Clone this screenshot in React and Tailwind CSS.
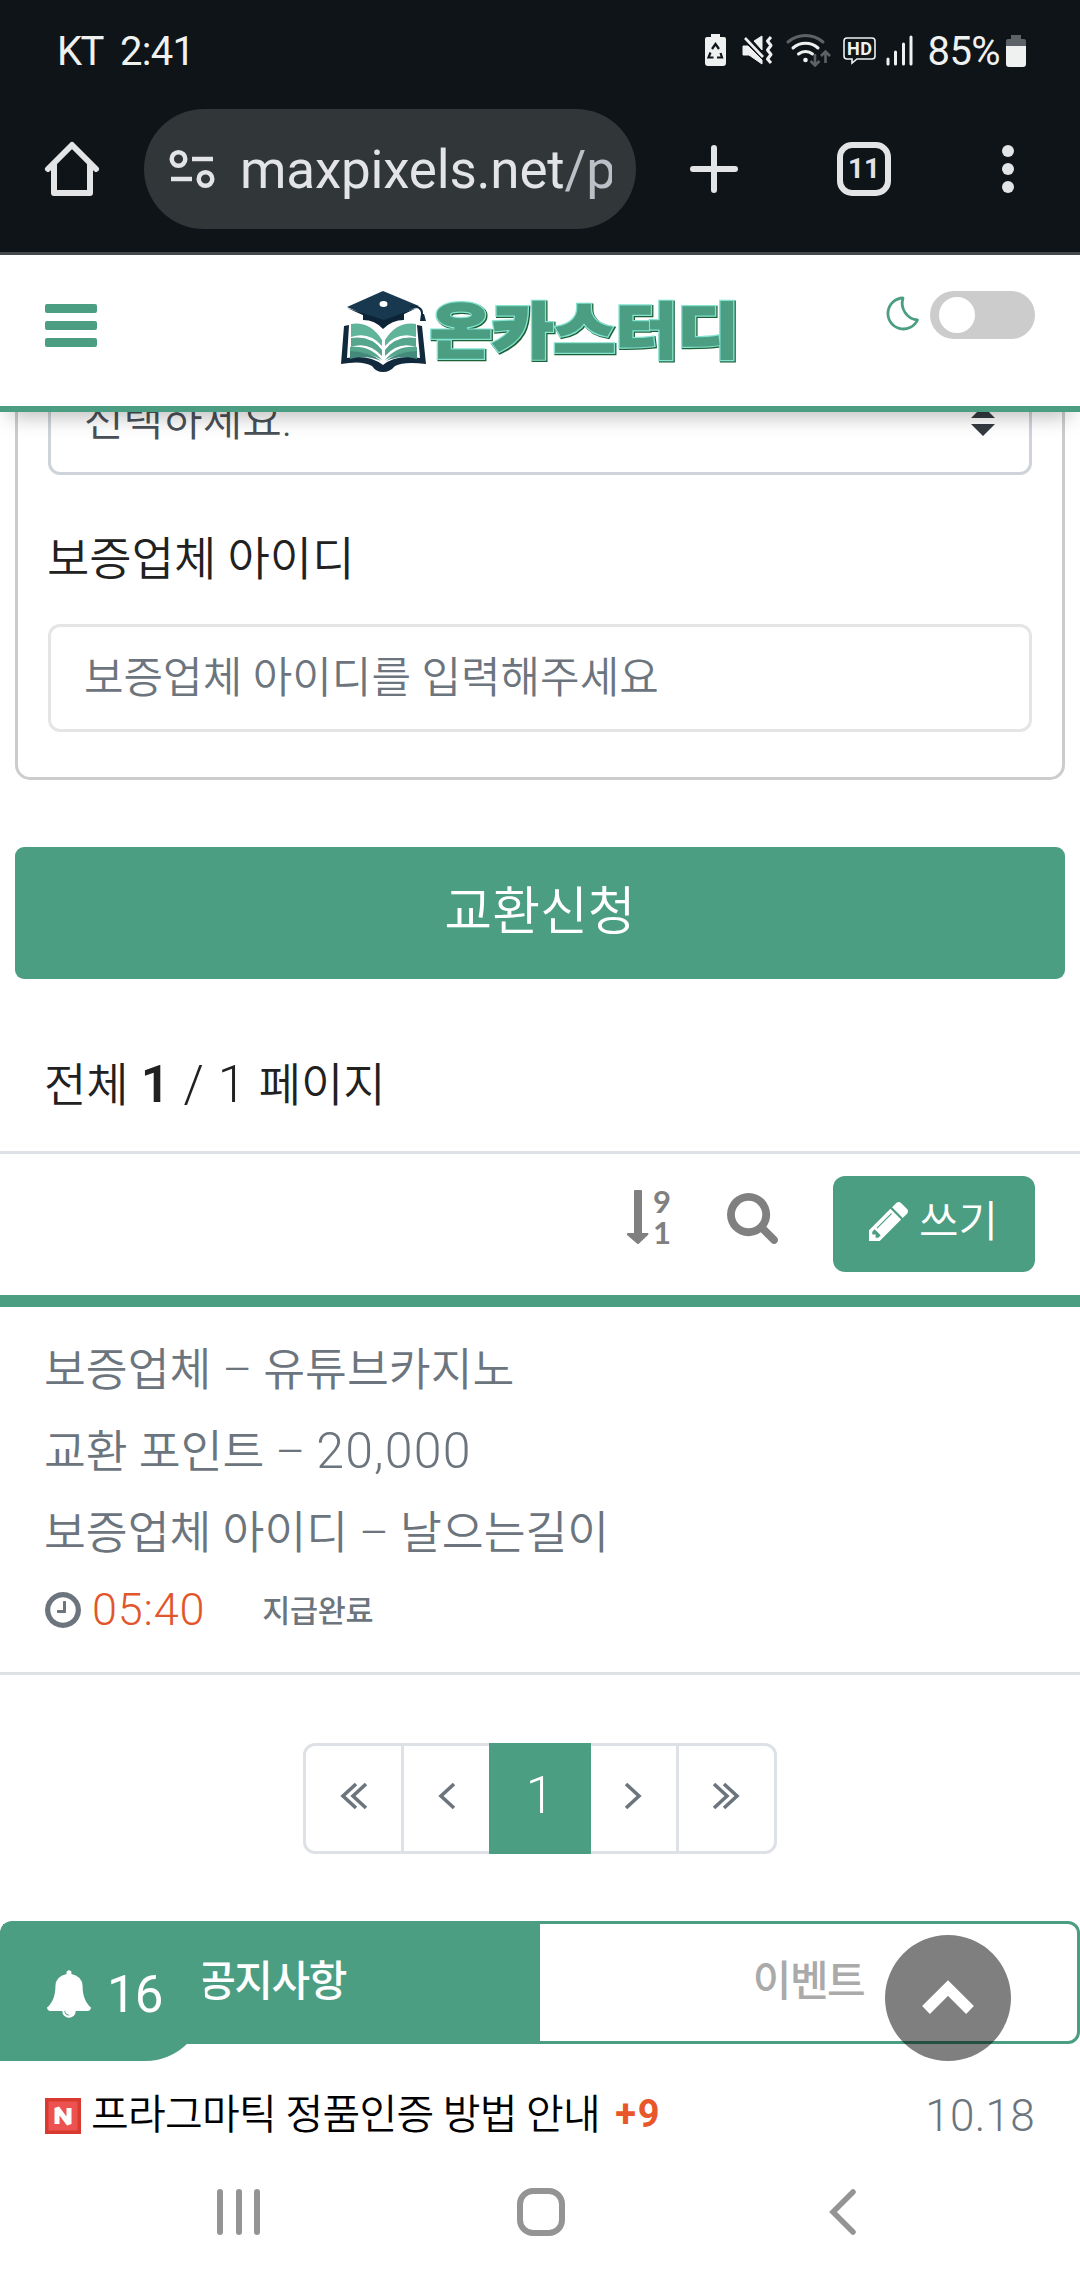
const faSearch = 'M1216 832q0-185-131.5-316.5t-316.5-131.5-316.5 131.5-131.5 316.5 131.5 316.5 316.5 131.5 316.5-131.5 131.5-316.5zm512 832q0 52-38 90t-90 38q-54 0-90-38l-343-342q-179 124-399 124-143 0-273.5-55.5t-225-150-150-225-55.5-273.5 55.5-273.5 150-225 225-150 273.5-55.5 273.5 55.5 225 150 150 225 55.5 273.5q0 220-124 399l343 343q37 37 37 90z';
const faPencil = 'M491 1536l91-91-235-235-91 91v107h128v128h107zm523-928q0-22-22-22-10 0-17 7l-542 542q-7 7-7 17 0 22 22 22 10 0 17-7l542-542q7-7 7-17zm-54-192l416 416-832 832h-416v-416zm683 96q0 53-37 90l-166 166-416-416 166-165q36-38 90-38 53 0 91 38l235 234q37 39 37 91z';
const faClock = 'M1024 544v448q0 14-9 23t-23 9h-320q-14 0-23-9t-9-23v-64q0-14 9-23t23-9h224v-352q0-14 9-23t23-9h64q14 0 23 9t9 23zm416 352q0-148-73-273t-198-198-273-73-273 73-198 198-73 273 73 273 198 198 273 73 273-73 198-198 73-273zm224 0q0 209-103 385.5t-279.5 279.5-385.5 103-385.5-103-279.5-279.5-103-385.5 103-385.5 279.5-279.5 385.5-103 385.5 103 279.5 279.5 103 385.5z';
const faBell = 'M912 1696q0-16-16-16-59 0-101.5-42.5t-42.5-101.5q0-16-16-16t-16 16q0 73 51.5 124.5t124.5 51.5q16 0 16-16zm816-288q0 52-38 90t-90 38h-448q0 106-75 181t-181 75-181-75-75-181h-448q-52 0-90-38t-38-90q50-42 91-88t85-119.5 74.5-158.5 50-206 19.5-260q0-152 117-282.5t307-158.5q-8-19-8-39 0-40 28-68t68-28 68 28 28 68q0 20-8 39 190 28 307 158.5t117 282.5q0 139 19.5 260t50 206 74.5 158.5 85 119.5 91 88z';

function Glyph({ d, viewBox, className }) {
    return (
        <svg viewBox={viewBox} className={className} fill="currentColor">
            <path d={d} />
        </svg>
    );
}

function StatusIcons() {
    return (
        <svg width="220" height="40" viewBox="700 32 220 40" fill="none">
            {/* Battery saver */}
            <path d="M710 35h9v3h4a2 2 0 0 1 2 2v24a3 3 0 0 1-3 3h-15a3 3 0 0 1-3-3v-24a2 2 0 0 1 2-2h4z" fill="#eff1f1" />
            <path d="M711 50l3.500-5 3.500 5M719.500 54l1.500 4.500h-5M712.500 58.500h-5l2-5" stroke="#0f1418" strokeWidth="2.200" />
            {/* Muted, vibrating */}
            <path d="M742 47h5l14 14v4l-13-9h-6zM753 42l8-5v14z" fill="#eff1f1" stroke="#eff1f1" strokeWidth="1" strokeLinejoin="round" />
            <path d="M744 39l18 19" stroke="#eff1f1" strokeWidth="2.600" />
            <path d="M770 38l-3.500 4 3.500 4.500-3.500 4.500 3.500 4.500-3.500 4.500 3.500 4" stroke="#eff1f1" strokeWidth="3" strokeLinejoin="round" />
            {/* Wifi */}
            <path d="M787 43a27 27 0 0 1 35 0" stroke="#5d6266" strokeWidth="3" strokeLinecap="round" />
            <path d="M792 49a19 19 0 0 1 25 0M797.500 55a11 11 0 0 1 14 0" stroke="#eff1f1" strokeWidth="3" strokeLinecap="round" />
            <circle cx="804.500" cy="61" r="2.300" fill="#eff1f1" />
            <path d="M814 55v11m-4.500-4 4.500 4.500 4.500-4.500M824.500 64v-11m-4.500 4 4.500-4.500 4.500 4.500" stroke="#5d6266" strokeWidth="2.600" />
            {/* HD voice */}
            <path d="M846 39h25a3 3 0 0 1 3 3v15a3 3 0 0 1-3 3h-15l-5 4v-4h-5a3 3 0 0 1-3-3v-15a3 3 0 0 1 3-3z" stroke="#eff1f1" strokeWidth="1.600" />
            <text x="846" y="56" fill="#eff1f1" fontFamily="Roboto" fontWeight="700" fontSize="18" textLength="25">HD</text>
            {/* Signal */}
            <path d="M887 60v5M894.500 53v12M902.500 45v20M910 38v27" stroke="#eff1f1" strokeWidth="3" strokeLinecap="round" />
        </svg>
    );
}

function StatusBar() {
    return (
        <div className="flex h-[102px] items-center justify-between pl-[57px] pr-[53px] text-[#eff1f1]">
            <div className="flex gap-[17px] pt-[1px] text-[40px] leading-none">
                <span className="tracking-[-1.500px]">KT</span>
                <span className="tracking-[-0.700px]">2:41</span>
            </div>
            <div className="flex items-center">
                <StatusIcons />
                <span className="ml-[7px] pt-[1px] text-[40px] leading-none tracking-[-0.600px]">85%</span>
                <svg className="ml-[5px]" width="22" height="34" viewBox="0 0 22 34">
                    <path d="M6 1h10v4h3a2 2 0 0 1 2 2v5H1V7a2 2 0 0 1 2-2h3z" fill="#5d6266" />
                    <path d="M1 12h20v18a3 3 0 0 1-3 3H4a3 3 0 0 1-3-3z" fill="#eff1f1" />
                </svg>
            </div>
        </div>
    );
}

function BrowserBar() {
    return (
        <div className="flex h-[150px] items-center pb-[16px] pl-[42px] text-[#e3e4e6]">
            <svg width="60" height="60" viewBox="42 139 60 60" fill="none" stroke="currentColor" strokeWidth="6" strokeLinecap="round" strokeLinejoin="round">
                <path d="M48 169l24-24 24 24M54 164v29h36v-29" />
            </svg>
            <div className="ml-[42px] flex h-[120px] w-[492px] items-center rounded-full bg-[#313639] pl-[24px]">
                <svg width="48" height="42" viewBox="168 148 48 42" fill="none" stroke="currentColor" strokeWidth="4.500">
                    <circle cx="178.500" cy="159" r="6.800" />
                    <circle cx="205.500" cy="179" r="6.800" />
                    <path d="M192 159h21M171 179h21" />
                </svg>
                <div className="ml-[24px] w-[372px] overflow-hidden whitespace-nowrap pt-[2px] text-[53px] leading-[70px] tracking-[-0.200px]">
                    maxpixels.net<span className="text-[#b9c0c6]">/p</span>
                </div>
            </div>
            <svg className="ml-[48px]" width="60" height="60" viewBox="0 0 60 60" stroke="currentColor" strokeWidth="6" strokeLinecap="round">
                <path d="M30 9v42M9 30h42" />
            </svg>
            <div className="ml-[93px] flex size-[54px] items-center justify-center rounded-[15px] border-[6px] border-[#e3e4e6] text-[28px] font-bold">11</div>
            <div className="ml-[111px] flex flex-col gap-[6px]">
                <i className="size-[12px] rounded-full bg-[#e3e4e6]" />
                <i className="size-[12px] rounded-full bg-[#e3e4e6]" />
                <i className="size-[12px] rounded-full bg-[#e3e4e6]" />
            </div>
        </div>
    );
}

function Logo() {
    return (
        <svg width="404" height="90" viewBox="338 288 404 90" className="ml-[241px]">
            <path d="M344 326l5-1-2 33q22-4 36 7 13-11 37-7l-3-33 5 1 4 38q-22-3-31 2-5 6-12 6t-11-6q-10-6-31-2z" fill="#10293d" />
            <path d="M351 324q19-3 31 16v6q-13-15-31-9z" fill="#5fb49a" />
            <path d="M416 324q-19-3-31 16v6q13-15 31-9z" fill="#5fb49a" />
            <path d="M351 338q20-3 31 12v6q-14-15-31-9zM416 338q-20-3-31 12v6q14-15 31-9z" fill="#55a68d" />
            <path d="M350 347q20-2 32 13-14-8-32-8zM417 347q-20-2-32 13 14-8 32-8z" fill="#55a68d" />
            <path d="M350 351q21 1 31 10-16-7-31-2zM417 351q-21 1-31 10 16-7 31-2z" fill="#438a7c" />
            <path d="M363 311l20-5 21 5v9q-12 0-21 9-8-9-20-9z" fill="#0d2336" />
            <path d="M347 307l36-16 36 15-35 17z" fill="#17384f" />
            <path d="M347 308l37 12 35-13-36 17z" fill="#0d2336" />
            <path d="M410 306q12 0 12 7v7" fill="none" stroke="#10293d" strokeWidth="2" />
            <path d="M421 314h3l2 7h-6z" fill="#10293d" />
            <ellipse cx="383.500" cy="304" rx="4" ry="3" fill="#fff" />
            <g fontFamily="'Noto Sans CJK KR', sans-serif" fontWeight="900" fontSize="60" strokeLinejoin="miter">
                <text x="431" y="354" textLength="309" lengthAdjust="spacingAndGlyphs" fill="#1f6038" stroke="#1f6038" strokeWidth="4.500">온카스터디</text>
                <text x="430" y="353" textLength="309" lengthAdjust="spacingAndGlyphs" fill="#85e3d2" stroke="#85e3d2" strokeWidth="4">온카스터디</text>
                <text x="430" y="353" textLength="309" lengthAdjust="spacingAndGlyphs" fill="#4b9e81" stroke="#4b9e81" strokeWidth="1.600">온카스터디</text>
            </g>
        </svg>
    );
}

function Header() {
    return (
        <header className="relative z-10 flex h-[157px] items-start border-b-[6px] border-[#4b9e81] bg-white pl-[45px] shadow-[0_14px_20px_-10px_rgba(0,0,0,0.28)]">
            <div className="mt-[49px] flex w-[52px] flex-col gap-[8px]">
                <i className="h-[9px] rounded-[2px] bg-[#4b9e81]" />
                <i className="h-[9px] rounded-[2px] bg-[#4b9e81]" />
                <i className="h-[9px] rounded-[2px] bg-[#4b9e81]" />
            </div>
            <div className="mt-[33px]">
                <Logo />
            </div>
            <svg className="ml-[143px] mt-[39px]" width="38" height="38" viewBox="885 294 38 38" fill="none" stroke="#4b9e81" strokeWidth="2.800" strokeLinejoin="round">
                <path d="M903 298a15.500 15.500 0 1 0 14.500 22a17 17 0 0 1-14.500-22z" />
            </svg>
            <div className="ml-[7px] mt-[36px] h-[48px] w-[105px] rounded-full bg-[#ccc] pl-[9px] pt-[6px]">
                <div className="size-[36px] rounded-full bg-white" />
            </div>
        </header>
    );
}

function ExchangeForm() {
    return (
        <>
            <div className="mx-[15px] flex h-[368px] flex-col rounded-b-[15px] border-x-[3px] border-b-[3px] border-[#ccc] px-[30px]">
                <div className="-mt-[45px] flex h-[108px] shrink-0 items-center justify-between rounded-[12px] border-[3px] border-[#ced4da] pl-[33px] pr-[34px]">
                    <span className="text-[43px] font-[350] text-[#495057]">선택하세요.</span>
                    <svg width="24" height="30" viewBox="0 0 24 30" fill="#343a40">
                        <path d="M0 12L12 0l12 12zM0 18l12 12 12-12z" />
                    </svg>
                </div>
                <div className="-ml-px flex h-[149px] shrink-0 items-center pt-[20px] text-[46px] font-[350] text-[#212121]">보증업체 아이디</div>
                <div className="flex h-[108px] shrink-0 items-center rounded-[12px] border-[3px] border-[#e5e5e5] pl-[33px] text-[43px] font-[350] text-[#6c757d]">
                    보증업체 아이디를 입력해주세요
                </div>
            </div>
            <button className="mx-[15px] mt-[67px] flex h-[132px] w-[1050px] items-center justify-center rounded-[9px] bg-[#4b9e81] text-[52px] font-[350] text-white">
                교환신청
            </button>
        </>
    );
}

function Toolbar() {
    return (
        <>
            <div className="mt-[60px] flex h-[115px] items-center border-b-[3px] border-[#dee2e6] pb-[24px] pl-[44px] pt-[4px] text-[46px] font-[350] text-[#212121]">
                <span className="flex items-center gap-[12px]">
                    전체
                    <span className="whitespace-pre text-[51px] font-[350] tracking-[0.700px]"><b className="font-semibold">1</b> / 1</span>
                    페이지
                </span>
            </div>
            <div className="flex h-[153px] items-start justify-end border-b-[12px] border-[#4b9e81] pr-[45px] pt-[22px]">
                <div className="mt-[14px] flex text-[#808080]">
                    <svg width="22" height="54" viewBox="0 0 22 54" fill="currentColor">
                        <path d="M7 1q0-1 1-1h6q1 0 1 1v42h6q1 0 0 2L11.500 54q-.500.500-1 0L0 45q-.500-2 1-2h6z" />
                    </svg>
                    <div className="-mt-[4px] ml-[4px] flex flex-col font-[Lato] text-[31px] font-bold leading-[31px]">
                        <span>9</span>
                        <span>1</span>
                    </div>
                </div>
                <Glyph d={faSearch} viewBox="64 128 1664 1664" className="ml-[56px] mt-[17px] size-[51px] text-[#808080]" />
                <button className="ml-[55px] flex h-[96px] w-[202px] items-center rounded-[12px] bg-[#4b9e81] pb-[6px] pl-[36px] text-[43px] font-[350] text-white">
                    <Glyph d={faPencil} viewBox="128 149 1515 1515" className="mr-[11px] size-[39px]" />
                    <span className="pt-[2px]">쓰기</span>
                </button>
            </div>
        </>
    );
}

function ExchangeItem() {
    return (
        <div className="h-[368px] border-b-[3px] border-[#dee2e6] px-[45px] pt-[23px] text-[#6c757d]">
            <div className="-ml-px whitespace-pre text-[45.500px] font-[350] leading-[81.500px]">
                <p className="h-[81.500px]">보증업체 – 유튜브카지노</p>
                <p className="-mt-[1px] h-[82.500px]">교환 포인트 – <span className="text-[50px] font-[350] tracking-[1.200px]">20,000</span></p>
                <p className="h-[81.500px]">보증업체 아이디 – 날으는길이</p>
            </div>
            <div className="flex h-[70px] items-center">
                <Glyph d={faClock} viewBox="128 128 1536 1536" className="size-[36px]" />
                <span className="ml-[11px] text-[45px] font-[350] tracking-[0.800px] text-[#e1562b]">05:40</span>
                <span className="ml-[57px] mt-[4px] text-[30.500px] font-medium tracking-[-0.300px]">지급완료</span>
            </div>
        </div>
    );
}

function Angle({ d, width }) {
    return (
        <svg width={width} height="28" viewBox={`0 0 ${width} 28`} fill="none" stroke="#6c757d" strokeWidth="3.600">
            <path d={d} />
        </svg>
    );
}

function Pagination() {
    return (
        <nav className="mx-auto mt-[68px] flex h-[111px] w-[474px] rounded-[12px] border-[3px] border-[#dee2e6]">
            <a className="flex w-[98px] items-center justify-center border-r-[3px] border-[#dee2e6] pb-1.5">
                <Angle width={28} d="M16 2L3 14l13 12M26 2L13 14l13 12" />
            </a>
            <a className="flex w-[85px] items-center justify-center pb-1.5">
                <Angle width={18} d="M16 2L3 14l13 12" />
            </a>
            <a className="-my-[3px] flex w-[102px] items-center justify-center bg-[#4b9e81] pb-[4px] text-[51px] font-[350] text-white">1</a>
            <a className="flex w-[85px] items-center justify-center pb-1.5 pr-0.5">
                <Angle width={18} d="M2 2l13 12L2 26" />
            </a>
            <a className="flex w-[98px] items-center justify-center border-l-[3px] border-[#dee2e6] pb-1.5 pr-0.5">
                <Angle width={28} d="M2 2l13 12L2 26M12 2l13 12L12 26" />
            </a>
        </nav>
    );
}

function Notices() {
    return (
        <section className="relative mt-[67px]">
            <div className="flex h-[123px] rounded-[12px] border-[3px] border-[#4b9e81] text-[42px] font-medium tracking-[-1.500px]">
                <div className="flex w-[537px] items-center justify-center bg-[#4b9e81] pb-[3px] text-white">공지사항</div>
                <div className="flex flex-1 items-center justify-center pb-[3px] text-[#aaa]">이벤트</div>
            </div>
            <div className="flex h-[145px] items-center pb-[1px] pl-[45px] pr-[45px] text-[41px] font-[350] text-black">
                <svg width="36" height="36" viewBox="0 0 36 36">
                    <rect width="36" height="36" fill="#d93a2f" />
                    <rect x="3.500" y="3.500" width="29" height="29" fill="#ec5350" />
                    <path d="M12 26V10l12 16V10" fill="none" stroke="#fff" strokeWidth="5" strokeLinejoin="bevel" />
                </svg>
                <span className="ml-[10px] tracking-[-0.700px]">프라그마틱 정품인증 방법 안내</span>
                <b className="mb-[4px] ml-[15px] text-[38px] font-bold tracking-[2px] text-[#e8572a]">+9</b>
                <span className="ml-auto text-[44px] font-[350] tracking-[0.300px] text-[#6c757d]">10.18</span>
            </div>

            {/* Floating buttons */}
            <div className="absolute left-0 top-[14px] flex h-[126px] w-[205px] items-center rounded-r-[60px] bg-[#4b9e81] pb-[8px] pl-[47px] text-[51px] text-white">
                <Glyph d={faBell} viewBox="64 0 1664 1792" className="mr-[16px] h-[48px] w-[44px]" />
                <span className="pt-[2px] tracking-[-1px]">16</span>
            </div>
            <div className="absolute right-[69px] top-[14px] flex size-[126px] items-center justify-center rounded-full bg-black/50">
                <svg width="54" height="36" viewBox="0 0 54 36" fill="none" stroke="#fff" strokeWidth="11">
                    <path d="M5 30L27 8l22 22" />
                </svg>
            </div>
        </section>
    );
}

function NavBar() {
    return (
        <div className="-mt-px flex h-[91px] pl-[217px] text-[#949494]">
            <svg width="44" height="48" viewBox="0 0 44 48" stroke="currentColor" strokeWidth="6" strokeLinecap="round">
                <path d="M3 4v40M22 4v40M40 4v40" />
            </svg>
            <div className="ml-[256px] h-[48px] w-[48px] rounded-[16px] border-[6px] border-[#949494]" />
            <svg className="ml-[262px]" width="32" height="48" viewBox="0 0 32 48" fill="none" stroke="currentColor" strokeWidth="5.500" strokeLinecap="round">
                <path d="M26 4L6 24l20 20" />
            </svg>
        </div>
    );
}

export default function App() {
    return (
        <div className="h-[2280px] w-[1080px] overflow-hidden bg-white font-[Roboto,'Noto_Sans_CJK_KR',sans-serif]">
            <div className="h-[255px] border-b-[3px] border-[#44484b] bg-[#0f1418]">
                <StatusBar />
                <BrowserBar />
            </div>
            <Header />
            <main>
                <ExchangeForm />
                <Toolbar />
                <ExchangeItem />
                <Pagination />
                <Notices />
            </main>
            <NavBar />
        </div>
    );
}
